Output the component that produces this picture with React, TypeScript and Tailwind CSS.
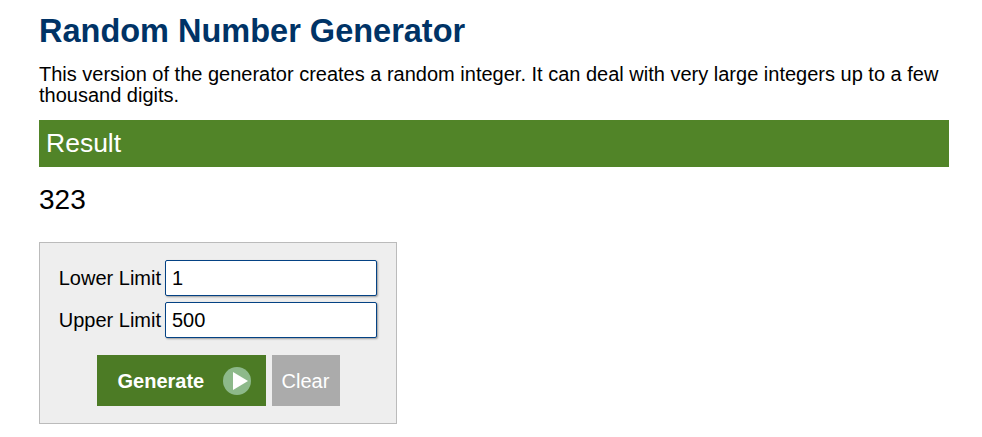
import { useState } from "react";

const font = { fontFamily: '"Liberation Sans", Arial, Helvetica, sans-serif' };

function PlayIcon() {
  return (
    <svg width="28" height="28" viewBox="0 0 28 28" aria-hidden="true">
      <circle cx="14" cy="14" r="14" fill="#8db98a" />
      <polygon points="10,5 25,14 10,23" fill="#ffffff" />
    </svg>
  );
}

export default function App() {
  const [lower, setLower] = useState("1");
  const [upper, setUpper] = useState("500");
  const [result, setResult] = useState<string>("323");

  const generate = () => {
    const lo = parseInt(lower, 10);
    const hi = parseInt(upper, 10);
    if (isNaN(lo) || isNaN(hi) || hi < lo) return;
    setResult(String(lo + Math.floor(Math.random() * (hi - lo + 1))));
  };

  return (
    <div className="bg-white text-black min-h-[437px]" style={font}>
      <div className="ml-[39px] w-[910px] pt-[13px]">
        <h1 className="text-[32.5px] leading-[36px] font-bold text-[#003366]">Random Number Generator</h1>
        <p className="mt-[15px] text-[20px] leading-[21px]">
          This version of the generator creates a random integer. It can deal with very large integers up to a few thousand digits.
        </p>

        <div className="mt-[14px] h-[47px] bg-[#518428] pl-[7px] flex items-center text-[26.5px] text-white">Result</div>
        <div className="mt-[17px] text-[28px] leading-[32px]">{result}</div>

        <div className="mt-[26px] w-[358px] border border-[#bbbbbb] bg-[#eeeeee] pt-[17px] pb-[17px]">
          <div className="flex flex-col gap-[6px]">
            <div className="flex items-center">
              <label className="w-[121px] text-right text-[20px]">Lower Limit</label>
              <input
                value={lower}
                onChange={(e) => setLower(e.target.value)}
                className="ml-[4px] w-[212px] h-[36px] bg-white border border-[#044284] rounded-[2px] shadow-[1px_1px_2px_rgba(0,0,0,0.35)] pl-[6px] text-[20px] outline-none"
                style={font}
              />
            </div>
            <div className="flex items-center">
              <label className="w-[121px] text-right text-[20px]">Upper Limit</label>
              <input
                value={upper}
                onChange={(e) => setUpper(e.target.value)}
                className="ml-[4px] w-[212px] h-[36px] bg-white border border-[#044284] rounded-[2px] shadow-[1px_1px_2px_rgba(0,0,0,0.35)] pl-[6px] text-[20px] outline-none"
                style={font}
              />
            </div>
          </div>
          <div className="mt-[17px] flex justify-center gap-[6px]">
            <button
              onClick={generate}
              className="w-[169px] h-[51px] bg-[#4c7b25] text-white text-[20px] font-bold flex items-center pl-[21px] pr-[15px]"
              style={font}
            >
              Generate
              <span className="ml-auto flex">
                <PlayIcon />
              </span>
            </button>
            <button
              onClick={() => setResult("")}
              className="w-[68px] h-[51px] bg-[#ababab] text-white text-[20px] flex items-center justify-center"
              style={font}
            >
              Clear
            </button>
          </div>
        </div>
      </div>
    </div>
  );
}
